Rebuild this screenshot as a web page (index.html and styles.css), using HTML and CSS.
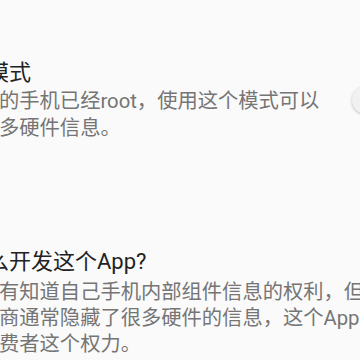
FILE: index.html
```html
<!DOCTYPE html>
<html>
<head>
    <title>设置</title>
    <link rel="stylesheet" href="styles.css">
</head>
<body>
    <div class="pref pref-root">
        <div class="pref-text">
            <div class="pref-title">模式</div>
            <div class="pref-summary">
                <div class="line">的手机已经root，使用这个模式可以</div>
                <div class="line">多硬件信息。</div>
            </div>
        </div>
        <div class="switch"><span class="thumb"></span></div>
    </div>

    <div class="pref pref-about">
        <div class="pref-text">
            <div class="pref-title">么开发这个App?</div>
            <div class="pref-summary">
                <div class="line">有知道自己手机内部组件信息的权利，但</div>
                <div class="line">商通常隐藏了很多硬件的信息，这个App</div>
                <div class="line">费者这个权力。</div>
            </div>
        </div>
    </div>
</body>
</html>
```

FILE: styles.css
```css
html, body { margin: 0; padding: 0; }
body { width: 360px; height: 360px; overflow: hidden; background: #fafafa; font-family: Roboto, "Noto Sans CJK SC", sans-serif; }
.pref { display: flex; align-items: center; width: 420px; }
.pref-root { padding-top: 59px; }
.pref-about { padding-top: 106px; }
.pref-text { flex: none; width: 352px; }
.pref-title { font-size: 22px; line-height: 28px; color: #222; white-space: nowrap; margin-left: -13px; }
.pref-summary { font-size: 20.3px; line-height: 26.5px; color: #757575; margin-top: 1px; margin-left: -1px; }
.pref-root .pref-summary { line-height: 27px; }
.pref-about .pref-summary { margin-top: 3px; line-height: 26px; }
.line { white-space: nowrap; }
.switch { flex: none; position: relative; width: 56px; height: 28px; }
.thumb { position: absolute; left: 0; top: -1px; width: 28px; height: 28px; border-radius: 50%; background: #f1f1f1; box-shadow: 0 1px 3px rgba(0,0,0,0.25); }
```
